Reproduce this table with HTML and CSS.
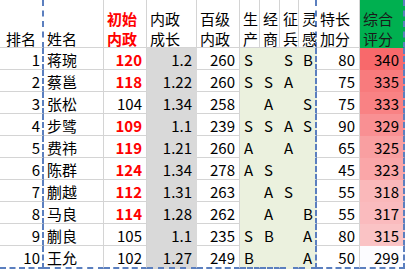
FILE: index.html
```html
<!DOCTYPE html>
<html lang="zh">
<head>
<meta charset="utf-8">
<title>内政评分</title>
<link rel="stylesheet" href="styles.css">
</head>
<body>
<div class="sheet">
  <div class="c h one d first">排名</div>
  <div class="c h one">姓名</div>
  <div class="c h red">初始<br>内政</div>
  <div class="c h">内政<br>成长</div>
  <div class="c h">百级<br>内政</div>
  <div class="c h">生<br>产</div>
  <div class="c h">经<br>商</div>
  <div class="c h">征<br>兵</div>
  <div class="c h d">灵<br>感</div>
  <div class="c h">特长<br>加分</div>
  <div class="c h gh d">综合<br>评分</div>

  <div class="c n d first">1</div><div class="c">蒋琬</div><div class="c n b">120</div><div class="c n g">1.2</div><div class="c n">260</div><div class="c l">S</div><div class="c l"></div><div class="c l">S</div><div class="c l d">B</div><div class="c n">80</div><div class="c n s d" style="background:#f8696b">340</div>

  <div class="c n d first">2</div><div class="c">蔡邕</div><div class="c n b">118</div><div class="c n g">1.22</div><div class="c n">260</div><div class="c l">S</div><div class="c l">S</div><div class="c l">A</div><div class="c l d"></div><div class="c n">75</div><div class="c n s d" style="background:rgb(248,123,125)">335</div>

  <div class="c n d first">3</div><div class="c">张松</div><div class="c n">104</div><div class="c n g">1.34</div><div class="c n">258</div><div class="c l"></div><div class="c l">A</div><div class="c l"></div><div class="c l d">S</div><div class="c n">75</div><div class="c n s d" style="background:rgb(249,130,132)">333</div>

  <div class="c n d first">4</div><div class="c">步骘</div><div class="c n b">109</div><div class="c n g">1.1</div><div class="c n">239</div><div class="c l">S</div><div class="c l">S</div><div class="c l">A</div><div class="c l d">S</div><div class="c n">90</div><div class="c n s d" style="background:rgb(249,144,147)">329</div>

  <div class="c n d first">5</div><div class="c">费祎</div><div class="c n b">119</div><div class="c n g">1.21</div><div class="c n">260</div><div class="c l">A</div><div class="c l"></div><div class="c l">A</div><div class="c l d"></div><div class="c n">65</div><div class="c n s d" style="background:rgb(249,159,161)">325</div>

  <div class="c n d first">6</div><div class="c">陈群</div><div class="c n b">124</div><div class="c n g">1.34</div><div class="c n">278</div><div class="c l">A</div><div class="c l">S</div><div class="c l"></div><div class="c l d"></div><div class="c n">45</div><div class="c n s d" style="background:rgb(250,166,168)">323</div>

  <div class="c n d first">7</div><div class="c">蒯越</div><div class="c n b">112</div><div class="c n g">1.31</div><div class="c n">263</div><div class="c l"></div><div class="c l">A</div><div class="c l">S</div><div class="c l d"></div><div class="c n">55</div><div class="c n s d" style="background:rgb(250,184,186)">318</div>

  <div class="c n d first">8</div><div class="c">马良</div><div class="c n b">114</div><div class="c n g">1.28</div><div class="c n">262</div><div class="c l"></div><div class="c l">A</div><div class="c l"></div><div class="c l d">B</div><div class="c n">55</div><div class="c n s d" style="background:rgb(250,187,190)">317</div>

  <div class="c n d first">9</div><div class="c">蒯良</div><div class="c n">105</div><div class="c n g">1.1</div><div class="c n">235</div><div class="c l">S</div><div class="c l">B</div><div class="c l"></div><div class="c l d">A</div><div class="c n">80</div><div class="c n s d" style="background:rgb(250,195,197)">315</div>

  <div class="c n d first e">10</div><div class="c e">王允</div><div class="c n e">102</div><div class="c n g e">1.27</div><div class="c n e">249</div><div class="c l e">B</div><div class="c l e"></div><div class="c l e"></div><div class="c l d e">A</div><div class="c n e">50</div><div class="c n s d e" style="background:rgb(252,252,255)">299</div>
</div>
</body>
</html>
```

FILE: styles.css
```css
html, body {
  margin: 0;
  padding: 0;
  background: #ffffff;
}

body {
  font-family: "Noto Sans CJK SC", "Noto Sans", sans-serif;
  font-size: 15px;
  color: #000000;
}

.sheet {
  display: grid;
  grid-template-columns: 44px 60px 43px 50px 43px 20px 20px 19px 18px 43px 45px;
  grid-template-rows: 48px repeat(9, 22px) 23px;
  width: 405px;
}

.c {
  box-sizing: border-box;
  border-right: 1px solid #d4d4d4;
  border-bottom: 1px solid #d4d4d4;
  padding: 1px 4px 0 3px;
  line-height: 21px;
  white-space: nowrap;
  overflow: visible;
}

.c.n {
  text-align: right;
}

.c.first {
  padding-left: 6px;
  padding-right: 2px;
}

.h {
  line-height: 20px;
  padding-top: 9px;
  padding-left: 3px;
  padding-right: 0;
}

.h.one {
  padding-top: 29px;
}

.red {
  color: #ff0000;
  font-weight: 700;
}

.b {
  color: #ff0000;
  font-weight: 700;
}

.g {
  background: #d9d9d9;
  border-right-color: transparent;
  border-bottom-color: transparent;
}

.l {
  background: #ebf1de;
  border-right-color: transparent;
  border-bottom-color: transparent;
  padding-left: 4px;
  padding-right: 0;
}

.s {
  border-bottom-color: transparent;
}

.gh {
  background: #00b050;
  color: #1a1a1a;
  border-bottom-color: transparent;
}

.d {
  border-right: 2px dashed #5b7fbf;
}

.e {
  border-bottom: 2px dashed #5b7fbf;
}
```
